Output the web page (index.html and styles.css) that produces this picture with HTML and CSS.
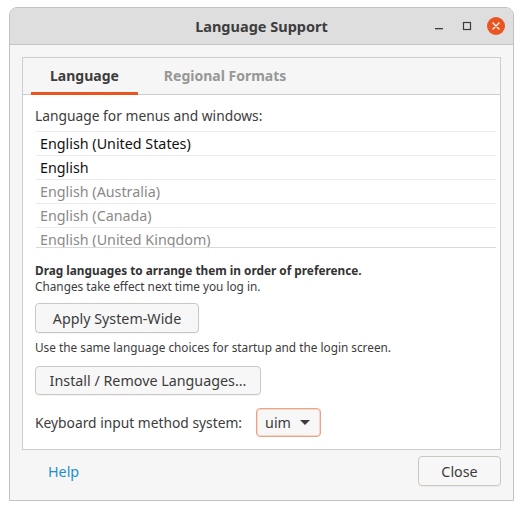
FILE: index.html
```html
<!DOCTYPE html>
<html lang="en">
<head>
    <meta charset="UTF-8">
    <title>Language Support</title>
    <link rel="stylesheet" href="styles.css">
</head>
<body>
    <div class="window">
        <!-- Заголовок окна -->
        <div class="titlebar">
            <div class="title">Language Support</div>
            <div class="controls">
                <span class="ctl">
                    <svg width="16" height="16" viewBox="0 0 16 16"><rect x="4" y="10" width="8" height="1.3" fill="#3c3c3c"/></svg>
                </span>
                <span class="ctl">
                    <svg width="16" height="16" viewBox="0 0 16 16"><rect x="4.5" y="4.5" width="7" height="7" fill="none" stroke="#3c3c3c" stroke-width="1.2"/></svg>
                </span>
                <span class="ctl close-ctl">
                    <svg width="18" height="18" viewBox="0 0 18 18">
                        <circle cx="9" cy="9" r="9" fill="#e95420"/>
                        <path d="M6 6 L12 12 M12 6 L6 12" stroke="#fff" stroke-width="1.3" stroke-linecap="round"/>
                    </svg>
                </span>
            </div>
        </div>

        <div class="body">
            <div class="notebook">
                <div class="tabs">
                    <div class="tab active">Language</div>
                    <div class="tab">Regional Formats</div>
                </div>
                <div class="page">
                    <div class="label">Language for menus and windows:</div>
                    <div class="langs">
                        <div class="lang">English (United States)</div>
                        <div class="lang">English</div>
                        <div class="lang off">English (Australia)</div>
                        <div class="lang off">English (Canada)</div>
                        <div class="lang off">English (United Kingdom)</div>
                    </div>
                    <div class="hint">
                        <b>Drag languages to arrange them in order of preference.</b><br>
                        Changes take effect next time you log in.
                    </div>
                    <button class="btn apply">Apply System-Wide</button>
                    <div class="hint small">Use the same language choices for startup and the login screen.</div>
                    <button class="btn install">Install / Remove Languages...</button>
                    <div class="im-row">
                        <span>Keyboard input method system:</span>
                        <div class="combo">uim <span class="arrow"></span></div>
                    </div>
                </div>
            </div>

            <div class="actions">
                <a class="help" href="#">Help</a>
                <button class="btn close">Close</button>
            </div>
        </div>
    </div>
</body>
</html>
```

FILE: styles.css
```css
body {
    margin: 0;
    background: #ffffff;
    font-family: 'Noto Sans', sans-serif;
    font-size: 13.8px;
    color: #3c3c3c;
}

.window {
    margin: 7px 0 0 9px;
    width: 503px;
    height: 492px;
    border: 1px solid #c2c2c2;
    border-radius: 8px 8px 0 0;
    background: #f6f6f6;
    overflow: hidden;
    display: flex;
    flex-direction: column;
}

.titlebar {
    position: relative;
    height: 36px;
    background: #dedede;
    border-bottom: 1px solid #c4c4c4;
    display: flex;
    align-items: center;
    justify-content: center;
}

.title {
    font-weight: bold;
    font-size: 14.5px;
    color: #3d3d3d;
}

.controls {
    position: absolute;
    right: 8px;
    top: 9px;
    display: flex;
    align-items: center;
    gap: 12px;
}

.ctl {
    display: flex;
    width: 16px;
    height: 18px;
    align-items: center;
    justify-content: center;
}

.close-ctl {
    width: 18px;
}

.body {
    flex: 1;
    padding: 12px 12px 0 12px;
    display: flex;
    flex-direction: column;
}

.notebook {
    border: 1px solid #cdcdcd;
    background: #fff;
}

.tabs {
    height: 36px;
    background: #f6f6f6;
    border-bottom: 1px solid #cdcdcd;
    display: flex;
    padding-left: 8px;
    gap: 7px;
}

.tab {
    padding: 0 19px;
    font-weight: bold;
    font-size: 14px;
    color: #979797;
    display: flex;
    align-items: center;
    border-bottom: 3px solid transparent;
    margin-bottom: -1px;
    padding-top: 1px;
}

.tab.active {
    color: #3c3c3c;
    border-bottom-color: #e95420;
}

.page {
    padding: 11px 4px 12px 12px;
}

.label {
    line-height: 20px;
    margin-bottom: 5px;
}

.langs {
    margin-left: 1px;
    height: 116px;
    overflow: hidden;
    border-bottom: 1px solid #d8d8d8;
}

.lang {
    height: 23px;
    line-height: 23px;
    border-top: 1px solid #ececec;
    padding-left: 4px;
    font-size: 14.3px;
    color: #111;
}

.lang.off {
    color: #8a8a8a;
}

.hint {
    margin-top: 14px;
    font-size: 11.8px;
    line-height: 16px;
}

.hint b {
    color: #333;
}

.hint.small {
    margin-top: 6px;
}

.btn {
    display: block;
    box-sizing: border-box;
    height: 30px;
    padding: 0;
    white-space: nowrap;
    font-family: inherit;
    font-size: 14.3px;
    color: #3c3c3c;
    background: #f7f7f7;
    border: 1px solid #cdc7c2;
    border-radius: 4px;
    box-shadow: 0 1px 0 rgba(0, 0, 0, 0.04);
}

.apply {
    margin-top: 9px;
    width: 164px;
}

.install {
    margin-top: 11px;
    width: 226px;
    height: 29px;
}

.im-row {
    margin-top: 13px;
    display: flex;
    align-items: center;
    gap: 14px;
}

.combo {
    width: 65px;
    height: 29px;
    box-sizing: border-box;
    border: 1px solid #e9a488;
    box-shadow: inset 0 0 0 1px #f6d6c8;
    border-radius: 4px;
    background: #f7f7f7;
    display: flex;
    align-items: center;
    justify-content: space-between;
    padding: 0 10px 0 8px;
    font-size: 14.3px;
}

.arrow {
    width: 0;
    height: 0;
    border-left: 5px solid transparent;
    border-right: 5px solid transparent;
    border-top: 5px solid #3c3c3c;
}

.actions {
    flex: 1;
    display: flex;
    align-items: flex-start;
    justify-content: space-between;
    padding: 6px 0 0 26px;
}

.help {
    color: #1f8fc8;
    text-decoration: none;
    font-size: 14.3px;
    margin-top: 6px;
}

.close {
    width: 83px;
}
```
